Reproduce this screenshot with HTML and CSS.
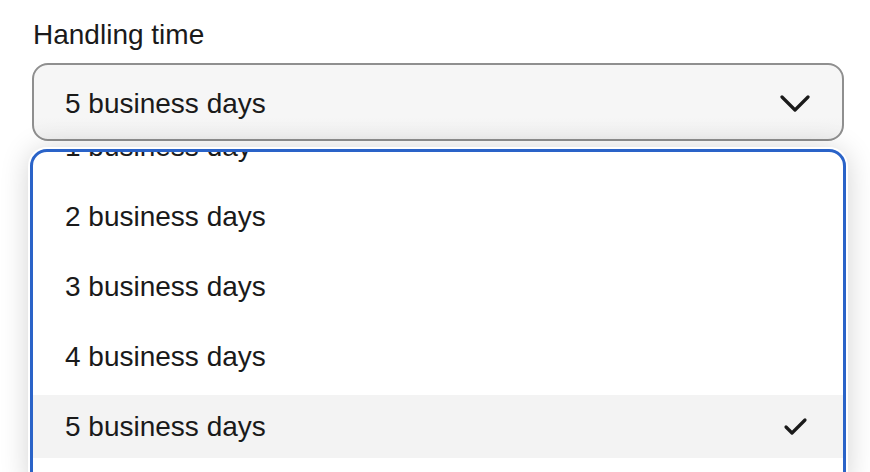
FILE: index.html
```html
<!DOCTYPE html>
<html lang="en">
<head>
<meta charset="utf-8">
<title>Handling time</title>
<link rel="stylesheet" href="styles.css">
</head>
<body>
<div class="field">
  <div class="label">Handling time</div>
  <div class="select">
    <span class="select-value">5 business days</span>
    <svg class="chevron" width="30" height="18" viewBox="0 0 30 18" aria-hidden="true">
      <polyline points="2,2 15,15 28,2" fill="none" stroke="#1a1a1a" stroke-width="3.2" stroke-linecap="round" stroke-linejoin="round"/>
    </svg>
  </div>
  <div class="menu">
    <ul class="options">
      <li class="option">1 business day</li>
      <li class="option">2 business days</li>
      <li class="option">3 business days</li>
      <li class="option">4 business days</li>
      <li class="option selected">5 business days
        <svg class="check" width="26" height="20" viewBox="0 0 26 20" aria-hidden="true">
          <polyline points="3,10 9,16 22,3" fill="none" stroke="#1a1a1a" stroke-width="3.2" stroke-linecap="round" stroke-linejoin="round"/>
        </svg>
      </li>
    </ul>
  </div>
</div>
</body>
</html>
```

FILE: styles.css
```css
* { box-sizing: border-box; }
html, body {
  margin: 0;
  padding: 0;
  background: #ffffff;
  overflow: hidden;
}
body {
  font-family: "Liberation Sans", Arial, Helvetica, sans-serif;
  color: #1a1a1a;
  font-size: 28px;
}
.field {
  width: 812px;
  margin-left: 32px;
  padding-top: 19px;
}
.label {
  line-height: 32px;
  padding-left: 1px;
  margin-bottom: 12px;
}
.select {
  height: 78px;
  border: 2px solid #8f8f8f;
  border-radius: 16px;
  background: linear-gradient(#f6f6f6, #f6f6f6 70%, #f1f1f1);
  display: flex;
  align-items: center;
  justify-content: space-between;
  padding: 3px 32px 0 31px;
}
.select-value { line-height: 32px; }
.chevron { display: block; margin-top: 1px; }
.menu {
  margin: 8px -2px 0 -2px;
  height: 340px;
  border: 3px solid #2a63c8;
  border-radius: 17px;
  background: #fff;
  overflow: hidden;
  box-shadow: 0 0 0 2px #ffffff, 0 2px 30px rgba(0, 0, 0, 0.2);
}
.options {
  list-style: none;
  margin: -37px 0 0 0;
  padding: 0;
  display: flex;
  flex-direction: column;
  gap: 7px;
}
.option {
  height: 63px;
  display: flex;
  align-items: center;
  justify-content: space-between;
  padding: 0 34px 0 32px;
  line-height: 32px;
}
.option.selected { background: #f3f3f3; }
.check { display: block; }
```
